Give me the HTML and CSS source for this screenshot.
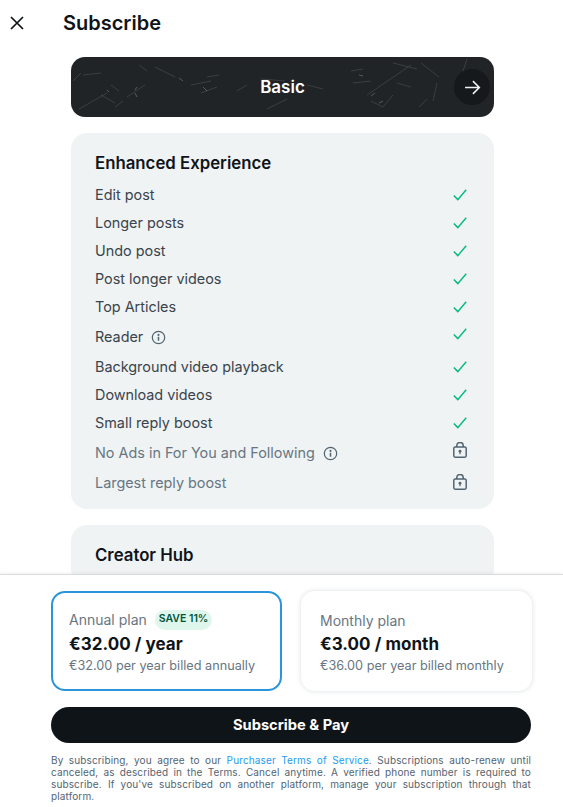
FILE: index.html
```html
<!DOCTYPE html>
<html lang="en">
<head>
<meta charset="utf-8">
<title>Subscribe</title>
<link rel="stylesheet" href="styles.css">
</head>
<body>
<svg class="defs" width="0" height="0" aria-hidden="true">
  <symbol id="check" viewBox="0 0 14 14"><path d="M.8 7.6 4.8 11.6 13.2 1.8" fill="none" stroke="#00ba7c" stroke-width="1.4"/></symbol>
  <symbol id="info" viewBox="0 0 16 16"><circle cx="8" cy="8" r="6.6" fill="none" stroke="currentColor" stroke-width="1.3"/><circle cx="8" cy="5.2" r="1.1" fill="currentColor"/><rect x="7.2" y="7.2" width="1.6" height="4.2" fill="currentColor"/></symbol>
  <symbol id="lock" viewBox="0 0 14 16"><rect x=".8" y="5" width="12.4" height="10.2" rx="1.4" fill="none" stroke="#536471" stroke-width="1.5"/><path d="M3.8 5V3.6a3.2 3.2 0 0 1 6.4 0V5" fill="none" stroke="#536471" stroke-width="1.5"/><circle cx="7" cy="9.2" r="1.4" fill="#536471"/><rect x="6.4" y="9.4" width="1.2" height="2.8" fill="#536471"/></symbol>
</svg>
<div class="app">
  <header class="top">
    <svg class="close" viewBox="0 0 16 16" aria-hidden="true"><path d="M2 2 14 14M14 2 2 14" stroke="#0f1419" stroke-width="1.7" fill="none"/></svg>
    <h1>Subscribe</h1>
  </header>
  <main class="scroll">
    <div class="tier">
      <svg class="scratches" viewBox="0 0 423 60" preserveAspectRatio="none" aria-hidden="true">
        <g stroke="#fff" stroke-width=".6" fill="none" opacity=".2">
          <path d="M8 52 36 36M30 38 44 46M74 28 56 40M40 28 48 34M52 44 44 50M84 10 104 20M68 8 76 14M120 28 140 24M130 36 146 30M166 34 176 28M136 20 148 18M190 22 214 24M196 52 216 42M236 28 252 32"/>
          <path d="M296 38 340 8M322 6 346 12M282 26 300 24M300 44 312 50M350 6 368 20M280 14 292 12M326 26 340 30M312 50 322 38M366 26 362 44M396 2 392 14M348 50 356 42M12 18 30 16M2 24 10 16"/>
        </g>
        <g stroke="#fff" stroke-width="1" fill="none" opacity=".25">
          <path d="M36 33 38 35M64 36 66 40M66 30 64 33M132 30 136 34M108 21 112 24M288 18 292 19M300 39 304 36M308 46 312 44"/>
        </g>
      </svg>
      <span class="tier-name">Basic</span>
      <span class="tier-next"><svg viewBox="0 0 16 16" aria-hidden="true"><path d="M1 8H14.4M8.4 2 14.4 8l-6 6" stroke="#eff3f4" stroke-width="1.5" fill="none"/></svg></span>
    </div>
    <section class="panel">
      <h2>Enhanced Experience</h2>
      <ul class="features">
        <li class="row"><span>Edit post</span><svg class="ic-check"><use href="#check"/></svg></li>
        <li class="row"><span>Longer posts</span><svg class="ic-check"><use href="#check"/></svg></li>
        <li class="row"><span>Undo post</span><svg class="ic-check"><use href="#check"/></svg></li>
        <li class="row"><span>Post longer videos</span><svg class="ic-check"><use href="#check"/></svg></li>
        <li class="row"><span>Top Articles</span><svg class="ic-check"><use href="#check"/></svg></li>
        <li class="row tall"><span>Reader</span><svg class="ic-info"><use href="#info"/></svg><svg class="ic-check"><use href="#check"/></svg></li>
        <li class="row"><span>Background video playback</span><svg class="ic-check"><use href="#check"/></svg></li>
        <li class="row"><span>Download videos</span><svg class="ic-check"><use href="#check"/></svg></li>
        <li class="row"><span>Small reply boost</span><svg class="ic-check"><use href="#check"/></svg></li>
        <li class="row tall off"><span>No Ads in For You and Following</span><svg class="ic-info"><use href="#info"/></svg><svg class="ic-lock"><use href="#lock"/></svg></li>
        <li class="row off"><span>Largest reply boost</span><svg class="ic-lock"><use href="#lock"/></svg></li>
      </ul>
    </section>
    <section class="panel">
      <h2>Creator Hub</h2>
    </section>
  </main>
  <footer class="sheet">
    <div class="plans">
      <div class="plan selected">
        <div class="plan-name">Annual plan <span class="save">SAVE 11%</span></div>
        <div class="price">€32.00 / year</div>
        <div class="billed">€32.00 per year billed annually</div>
      </div>
      <div class="plan">
        <div class="plan-name">Monthly plan</div>
        <div class="price">€3.00 / month</div>
        <div class="billed">€36.00 per year billed monthly</div>
      </div>
    </div>
    <button class="pay" type="button">Subscribe &amp; Pay</button>
    <p class="legal">By subscribing, you agree to our <a href="#">Purchaser Terms of Service</a>. Subscriptions auto-renew until canceled, as described in the Terms. Cancel anytime. A verified phone number is required to subscribe. If you've subscribed on another platform, manage your subscription through that platform.</p>
  </footer>
</div>
</body>
</html>
```
FILE: styles.css
```css
* { box-sizing: border-box; }
html, body { margin: 0; height: 100%; }
body { background: #fff; color: #0f1419; font-family: Inter, "Liberation Sans", sans-serif; overflow: hidden; }
.defs { position: absolute; }
.app { height: 100vh; display: flex; flex-direction: column; }

.top { height: 46px; flex: none; display: flex; align-items: center; padding-left: 9px; }
.close { width: 16px; height: 16px; flex: none; }
h1 { margin: 0 0 0 38px; font-size: 20px; font-weight: 600; line-height: 24px; }

.scroll { flex: 1; min-height: 0; overflow: hidden; padding: 11px 69px 0 71px; display: flex; flex-direction: column; gap: 16px; }
.tier { height: 60px; flex: none; position: relative; overflow: hidden; border-radius: 14px; background: #212427; display: flex; align-items: center; justify-content: center; color: #fff; }
.scratches { position: absolute; inset: 0; width: 100%; height: 100%; filter: blur(.3px); }
.tier-name { position: relative; font-size: 17px; font-weight: 600; }
.tier-next { position: absolute; right: 4px; top: 12px; width: 36px; height: 36px; border-radius: 50%; background: #15191c; display: flex; align-items: center; justify-content: center; }
.tier-next svg { width: 17px; height: 17px; }

.panel { flex: none; background: #eff3f4; border-radius: 16px; padding: 18px 24px 12px; }
h2 { margin: 0; font-size: 16.8px; font-weight: 600; line-height: 24px; height: 30px; }
.features { list-style: none; margin: 0; padding: 0; }
.row { height: 28px; display: flex; align-items: center; font-size: 14.4px; color: #3a444c; position: relative; }
.row span { margin-top: -1px; padding-bottom: 1px; }
.row.tall { height: 32px; }
.row.off { color: #687682; }
.ic-check { position: absolute; right: 3px; top: 7px; width: 14px; height: 14px; }
.row.tall .ic-check { top: 6px; }
.ic-lock { position: absolute; right: 3px; top: 5px; width: 14px; height: 16px; }
.ic-info { width: 15px; height: 15px; margin-left: 8px; color: #536471; }

.sheet { height: 233px; flex: none; background: #fff; border-top: 1px solid #d9dcde; box-shadow: 0 -1px 3px rgba(0,0,0,.06); padding: 16px 32px 0 51px; position: relative; }
.plans { display: grid; grid-template-columns: 1fr 1fr; gap: 19px; margin-right: -1px; }
.plan { height: 100px; border-radius: 14px; padding: 20px 19px 0; box-shadow: 0 0 5px rgba(83,100,113,.22); background: #fff; }
.plan.selected { border: 2px solid #2b95dc; box-shadow: none; padding: 17px 16px 0; }
.plan-name { font-size: 14px; line-height: 20px; color: #687682; display: flex; align-items: center; gap: 8px; height: 20px; }
.save { font-size: 10.5px; font-weight: 600; line-height: 18px; height: 20px; padding: 0 4px 2px; border-radius: 10px; background: #dff6ec; color: #00553a; }
.price { font-size: 17px; font-weight: 700; line-height: 24px; margin-top: 2px; letter-spacing: .05px; }
.plan:not(.selected) .price { margin-top: 1px; }
.billed { font-size: 12.7px; line-height: 18px; color: #687682; margin-top: 1px; }
.pay { display: block; width: 100%; height: 36px; margin: 16px 0 0; padding: 0 0 1px; border: 0; border-radius: 18px; background: #0f1419; color: #fff; font: 700 14.7px Inter, "Liberation Sans", sans-serif; }
.legal { margin: 11px 0 0; font-size: 10px; line-height: 12px; color: #536471; text-align: justify; letter-spacing: .13px; }
.legal a { color: #1d9bf0; text-decoration: none; }
```
